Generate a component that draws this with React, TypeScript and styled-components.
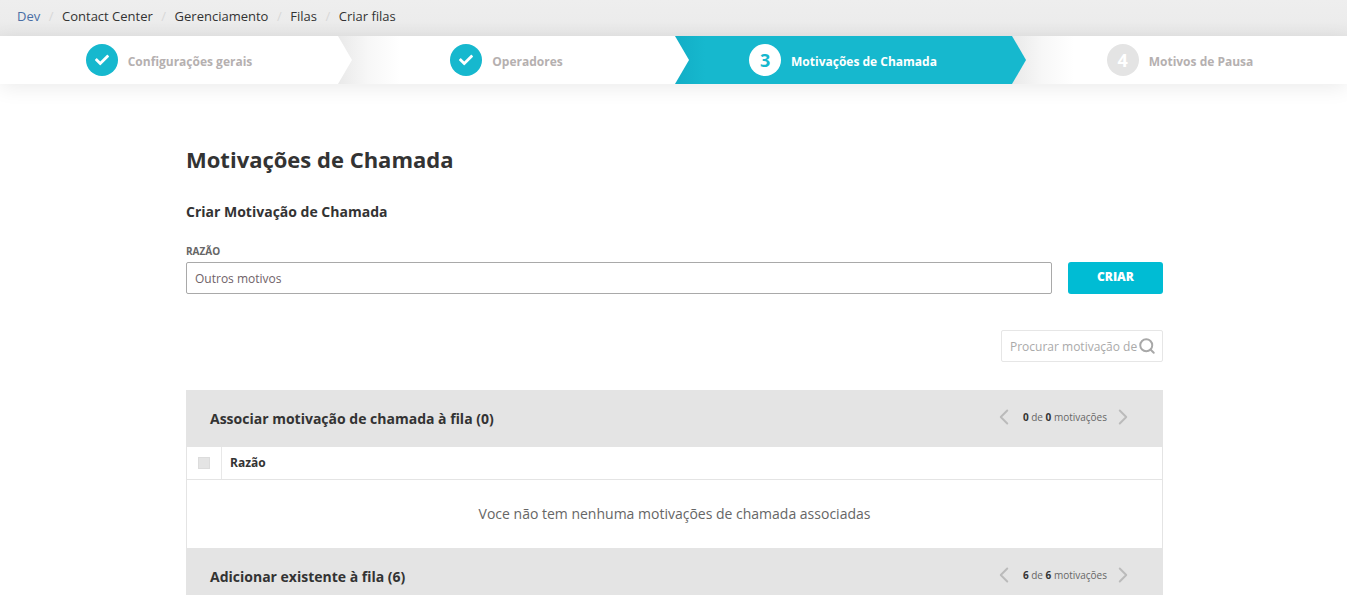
import React from "react";
import styled, { createGlobalStyle } from "styled-components";
import { FaCheck } from "react-icons/fa";
import { ChevronLeft, ChevronRight, Search } from "lucide-react";

const GlobalStyle = createGlobalStyle`
  html, body {
    margin: 0;
    height: 100%;
    overflow: hidden;
    background: #fff;
    font-family: "Open Sans", "Liberation Sans", sans-serif;
    color: #333;
  }
  * { box-sizing: border-box; }
`;

const Breadcrumb = styled.nav`
  height: 36px;
  display: flex;
  align-items: center;
  padding: 0 0 4px 17px;
  font-size: 13px;
  background: linear-gradient(180deg, #eeeeee 0%, #ececec 60%, #e6e6e6 100%);
`;

const Crumb = styled.span<{ $root?: boolean }>`
  color: ${({ $root }) => ($root ? "#4a6fa5" : "#333")};
`;

const Slash = styled.span`
  color: #d8d8d8;
  margin: 0 8.5px;
`;

const Steps = styled.div`
  height: 48px;
  display: grid;
  grid-template-columns: 338px 337px 337px 1fr;
  position: relative;
  box-shadow: 0 4px 20px rgba(0, 0, 0, 0.08);
`;

const Step = styled.div<{ $active?: boolean; $faded?: boolean; $tip?: boolean }>`
  position: relative;
  display: flex;
  align-items: center;
  justify-content: center;
  gap: 10px;
  background: ${({ $active, $faded }) =>
    $active
      ? "linear-gradient(90deg, #12aec6 0, #16b8ce 30px)"
      : $faded
      ? "linear-gradient(90deg, #e9e9e9 0, #f7f7f7 30px, #fff 62px)"
      : "#fff"};

  ${({ $active }) =>
    $active &&
    `padding-right: 1px;
    &::before {
      content: "";
      position: absolute;
      left: 0;
      top: 0;
      width: 14px;
      height: 100%;
      background: #fff;
      clip-path: polygon(0 0, 100% 50%, 0 100%);
    }`}

  ${({ $tip, $active }) =>
    $tip &&
    `&::after {
      content: "";
      position: absolute;
      left: 100%;
      top: 0;
      width: 14px;
      height: 100%;
      z-index: 2;
      background: ${$active ? "#16b8ce" : "#fff"};
      clip-path: polygon(0 0, 100% 50%, 0 100%);
    }`}

  &:last-child {
    padding-left: 1px;
  }
`;

const Circle = styled.span<{ $variant: "done" | "current" | "todo" }>`
  width: 32px;
  height: 32px;
  border-radius: 50%;
  flex: none;
  display: flex;
  align-items: center;
  justify-content: center;
  font-size: 18px;
  font-weight: 700;
  position: relative;
  z-index: 3;
  background: ${({ $variant }) =>
    $variant === "done" ? "#16b8ce" : $variant === "current" ? "#fff" : "#e4e4e4"};
  color: ${({ $variant }) =>
    $variant === "done" ? "#fff" : $variant === "current" ? "#16b8ce" : "#fff"};
`;

const StepLabel = styled.span<{ $active?: boolean }>`
  font-size: 12px;
  font-weight: 700;
  white-space: nowrap;
  position: relative;
  z-index: 3;
  padding-top: 2px;
  color: ${({ $active }) => ($active ? "#fff" : "#b5b0b0")};
`;

const Content = styled.main`
  width: 977px;
  margin-left: 186px;
  padding-top: 60px;
`;

const Title = styled.h1`
  margin: 0;
  height: 30px;
  font-size: 22px;
  line-height: 30px;
  font-weight: 700;
  color: #333;
`;

const Subtitle = styled.h2`
  margin: 28px 0 0;
  height: 20px;
  font-size: 14px;
  line-height: 20px;
  font-weight: 700;
  color: #333;
`;

const FieldLabel = styled.label`
  display: block;
  margin-top: 22px;
  height: 14px;
  font-size: 10px;
  line-height: 14px;
  font-weight: 700;
  color: #666;
`;

const FormRow = styled.div`
  display: flex;
  gap: 16px;
  margin-top: 4px;
`;

const TextInput = styled.div`
  flex: 1;
  height: 32px;
  display: flex;
  align-items: center;
  padding: 0 8px;
  font-size: 12px;
  color: #6f6268;
  border: 1px solid #a9a9a9;
  border-radius: 2px;
`;

const CreateButton = styled.button`
  width: 95px;
  height: 32px;
  border: 0;
  border-radius: 3px;
  background: #00bcd4;
  color: #fff;
  font-family: inherit;
  font-size: 12px;
  font-weight: 800;
  padding: 0 0 3px;
`;

const SearchRow = styled.div`
  display: flex;
  justify-content: flex-end;
  margin-top: 36px;
`;

const SearchBox = styled.div`
  width: 162px;
  height: 32px;
  display: flex;
  align-items: center;
  justify-content: space-between;
  padding: 0 6px 0 8px;
  border: 1px solid #e6e6e6;
  border-radius: 2px;
  font-size: 12px;
  color: #aaa;
  white-space: nowrap;
  overflow: hidden;

  svg {
    flex: none;
    color: #a8a8a8;
  }
`;

const SectionHeader = styled.div<{ $first?: boolean }>`
  height: 57px;
  margin-top: ${({ $first }) => ($first ? "28px" : "0")};
  display: flex;
  align-items: center;
  justify-content: space-between;
  padding: 0 27px 1px 24px;
  background: #e4e4e4;
`;

const SectionTitle = styled.span`
  font-size: 14px;
  font-weight: 700;
  color: #333;
`;

const Pager = styled.div`
  display: flex;
  align-items: center;
  margin-bottom: 2px;
  font-size: 10px;
  color: #666;

  svg {
    color: #bbb;
    flex: none;
  }

  b {
    color: #333;
  }
`;

const PagerText = styled.span`
  margin: 0 3px 0 6px;
  white-space: nowrap;
`;

const TableBox = styled.div`
  border: solid #e4e4e4;
  border-width: 0 1px;
`;

const HeadRow = styled.div`
  height: 33px;
  display: flex;
  border-bottom: 1px solid #e4e4e4;
`;

const CheckCell = styled.div`
  width: 35px;
  display: flex;
  align-items: center;
  justify-content: center;
  border-right: 1px solid #e8e8e8;
`;

const CheckBox = styled.span`
  width: 12px;
  height: 12px;
  background: #e4e4e4;
  border: 1px solid #dcdcdc;
`;

const HeadCell = styled.div`
  display: flex;
  align-items: center;
  padding: 0 0 1px 8px;
  font-size: 12px;
  font-weight: 700;
  color: #333;
`;

const Empty = styled.div`
  height: 68px;
  display: flex;
  align-items: center;
  justify-content: center;
  padding-bottom: 2px;
  font-size: 14px;
  color: #666;
`;

function PagerControl({ count }: { count: number }) {
  return (
    <Pager>
      <ChevronLeft size={26} strokeWidth={1.8} />
      <PagerText>
        <b>{count}</b> de <b>{count}</b> motivações
      </PagerText>
      <ChevronRight size={26} strokeWidth={1.8} />
    </Pager>
  );
}

export default function App() {
  return (
    <>
      <GlobalStyle />
      <Breadcrumb>
        <Crumb $root>Dev</Crumb>
        <Slash>/</Slash>
        <Crumb>Contact Center</Crumb>
        <Slash>/</Slash>
        <Crumb>Gerenciamento</Crumb>
        <Slash>/</Slash>
        <Crumb>Filas</Crumb>
        <Slash>/</Slash>
        <Crumb>Criar filas</Crumb>
      </Breadcrumb>
      <Steps>
        <Step $tip>
          <Circle $variant="done">
            <FaCheck size={14} />
          </Circle>
          <StepLabel>Configurações gerais</StepLabel>
        </Step>
        <Step $faded>
          <Circle $variant="done">
            <FaCheck size={14} />
          </Circle>
          <StepLabel>Operadores</StepLabel>
        </Step>
        <Step $active $tip>
          <Circle $variant="current">3</Circle>
          <StepLabel $active>Motivações de Chamada</StepLabel>
        </Step>
        <Step $faded>
          <Circle $variant="todo">4</Circle>
          <StepLabel>Motivos de Pausa</StepLabel>
        </Step>
      </Steps>
      <Content>
        <Title>Motivações de Chamada</Title>
        <Subtitle>Criar Motivação de Chamada</Subtitle>
        <FieldLabel>RAZÃO</FieldLabel>
        <FormRow>
          <TextInput>Outros motivos</TextInput>
          <CreateButton>CRIAR</CreateButton>
        </FormRow>
        <SearchRow>
          <SearchBox>
            Procurar motivação de
            <Search size={18} strokeWidth={2.6} />
          </SearchBox>
        </SearchRow>
        <SectionHeader $first>
          <SectionTitle>Associar motivação de chamada à fila (0)</SectionTitle>
          <PagerControl count={0} />
        </SectionHeader>
        <TableBox>
          <HeadRow>
            <CheckCell>
              <CheckBox />
            </CheckCell>
            <HeadCell>Razão</HeadCell>
          </HeadRow>
          <Empty>Voce não tem nenhuma motivações de chamada associadas</Empty>
        </TableBox>
        <SectionHeader>
          <SectionTitle>Adicionar existente à fila (6)</SectionTitle>
          <PagerControl count={6} />
        </SectionHeader>
      </Content>
    </>
  );
}
